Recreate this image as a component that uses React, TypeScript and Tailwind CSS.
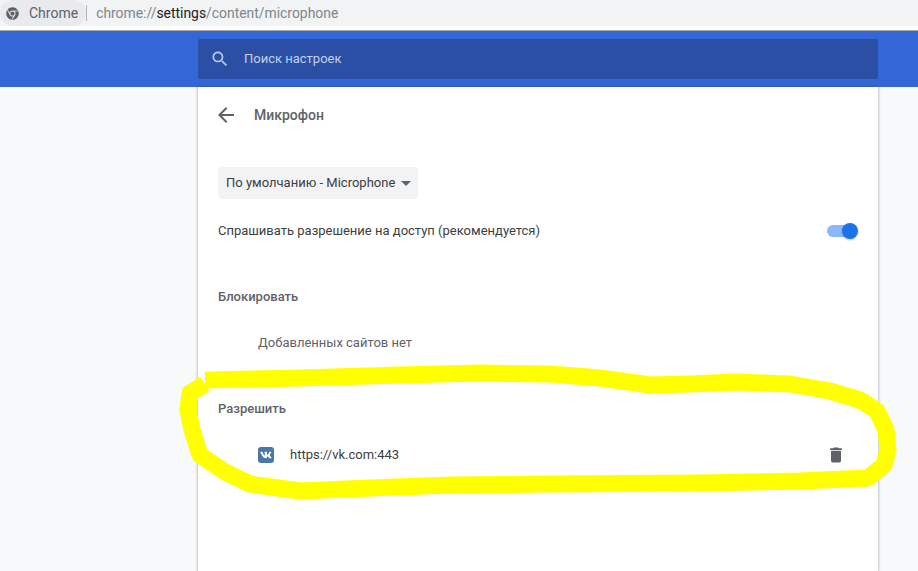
import { FaChrome, FaVk } from "react-icons/fa";

const scribble = "M205 380 L300 378 L400 375 L480 373 L550 374 L600 378 L650 385 L690 384 L735 382 L790 384 L830 391 L860 400 L877 411 L886 430 L888 450 L884 465 L868 478 L800 481 L700 483 L548 484 L450 485 L370 488 L300 491 L250 484 L225 472 L200 455 L192 430 L188 410 L190 393 L205 384";

export default function App() {
  return (
    <div className="relative h-[571px] w-[918px] overflow-hidden bg-[#f8f9fa] font-['Roboto',sans-serif] text-[13px] text-[#3c4043]">
      <div className="flex h-[26px] items-center bg-[#f1f3f4]">
        <div className="flex h-[26px] items-center rounded-[13px] bg-[#e8eaed] pl-[6px] pr-[8px]">
          <FaChrome className="h-[13px] w-[13px] text-[#5f6368]" />
          <span className="ml-[10px] text-[14px] text-[#5f6368]">Chrome</span>
        </div>
        <div className="h-[16px] w-px bg-[#b0b3b8]" />
        <span className="ml-[9px] text-[13.9px] text-[#80868b]">chrome://<span className="text-[#202124]">settings</span>/content/microphone</span>
      </div>
      <div className="h-[4px] bg-white" />
      <div className="h-px bg-[#a8a8a8]" />
      <div className="flex h-[56px] items-center bg-[#3367d6] pl-[198px] pr-[40px]">
        <div className="flex h-[40px] flex-1 items-center rounded-[2px] bg-[#2a4fa5] pl-[12px]">
          <svg viewBox="0 0 24 24" className="h-[20px] w-[20px] fill-[#b9c8ec]">
            <path d="M15.5 14h-.79l-.28-.27C15.41 12.59 16 11.11 16 9.5 16 5.91 13.09 3 9.5 3S3 5.91 3 9.5 5.91 16 9.5 16c1.61 0 3.09-.59 4.23-1.57l.27.28v.79l5 4.99L20.49 19l-4.99-5zm-6 0C7.01 14 5 11.99 5 9.5S7.01 5 9.5 5 14 7.01 14 9.5 11.99 14 9.5 14z" />
          </svg>
          <span className="ml-[14px] text-[#c3d0ef]">Поиск настроек</span>
        </div>
      </div>
      <div className="ml-[198px] h-[484px] w-[680px] bg-white px-[20px] shadow-[0_0_2px_1px_rgba(60,64,67,0.28)]">
        <div className="flex h-[56px] items-center">
          <svg viewBox="0 0 24 24" className="-ml-[4px] h-[24px] w-[24px] fill-[#5f6368]">
            <path d="M20 11H7.83l5.59-5.59L12 4l-8 8 8 8 1.41-1.41L7.83 13H20v-2z" />
          </svg>
          <span className="ml-[16px] text-[14px] font-medium text-[#5f6368]">Микрофон</span>
        </div>
        <div className="mt-[24px] flex h-[32px] w-[200px] items-center rounded-[4px] bg-[#f1f3f4] pl-[8px]">
          <span>По умолчанию - Microphone</span>
          <svg viewBox="0 0 10 5" className="ml-[6px] h-[5px] w-[10px] fill-[#5f6368]"><path d="M0 0h10L5 5z" /></svg>
        </div>
        <div className="mt-[15px] flex h-[34px] items-center justify-between">
          <span>Спрашивать разрешение на доступ (рекомендуется)</span>
          <div className="relative mr-[2px] h-[12px] w-[29px] rounded-full bg-[#8ab8f8]">
            <div className="absolute right-[-2px] top-[-2px] h-[16px] w-[16px] rounded-full bg-[#1a73e8] shadow-[0_1px_2px_rgba(60,64,67,0.3)]" />
          </div>
        </div>
        <div className="mt-[33px] flex h-[32px] items-center font-medium text-[#5f6368]">Блокировать</div>
        <div className="mt-[14px] flex h-[32px] items-center pl-[40px] text-[#5f6368]">Добавленных сайтов нет</div>
        <div className="mt-[34px] flex h-[32px] items-center font-medium text-[#5f6368]">Разрешить</div>
        <div className="mt-[14px] flex h-[32px] items-center justify-between pl-[40px] pr-[12px]">
          <div className="flex items-center">
            <div className="flex h-[16px] w-[16px] items-center justify-center rounded-[3px] bg-[#4a76a8]">
              <FaVk className="h-[12px] w-[12px] text-white" />
            </div>
            <span className="ml-[16px]">https://vk.com:443</span>
          </div>
          <svg viewBox="0 0 24 24" className="h-[20px] w-[20px] fill-[#5f6368]">
            <path d="M6 19c0 1.1.9 2 2 2h8c1.1 0 2-.9 2-2V7H6v12zM19 4h-3.5l-1-1h-5l-1 1H5v2h14V4z" />
          </svg>
        </div>
      </div>
      <svg viewBox="0 0 918 571" className="pointer-events-none absolute left-0 top-0 h-[571px] w-[918px]">
        <path d={scribble} fill="none" stroke="#ffff00" strokeWidth="17" strokeLinejoin="round" />
      </svg>
    </div>
  );
}
